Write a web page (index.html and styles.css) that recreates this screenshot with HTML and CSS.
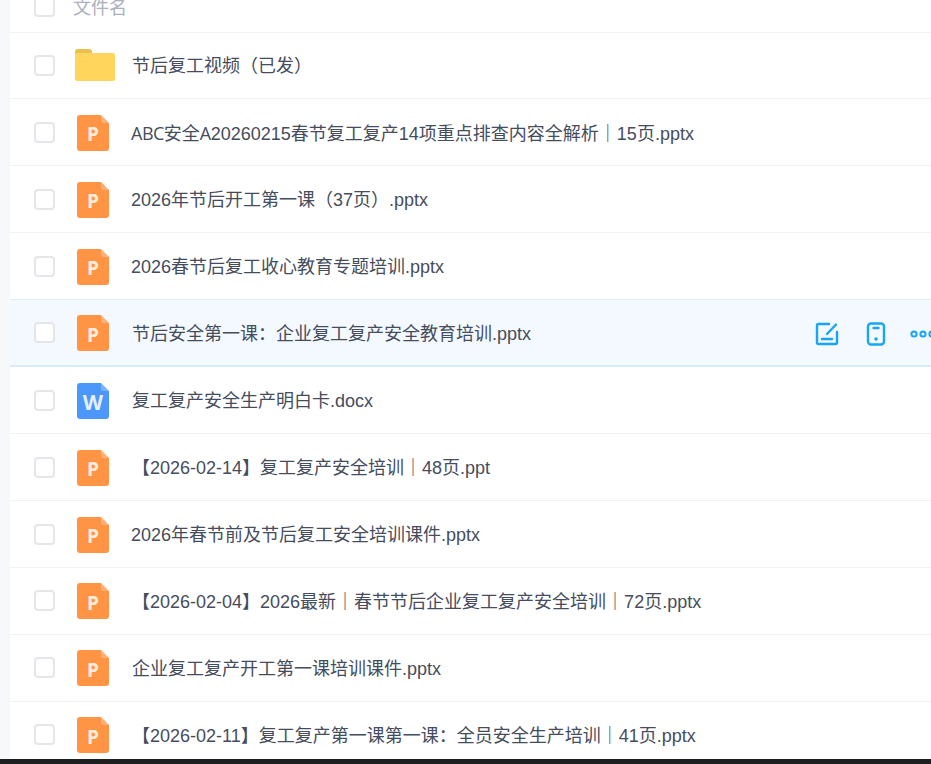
FILE: index.html
```html
<!DOCTYPE html>
<html lang="zh-CN">
<head>
<meta charset="utf-8">
<title>文件列表</title>
<link rel="stylesheet" href="styles.css">
</head>
<body>
<svg class="defs" width="0" height="0" aria-hidden="true">
  <symbol id="doc" viewBox="0 0 32 36">
    <path d="M3 0H24L32 8V33a3 3 0 0 1-3 3H3a3 3 0 0 1-3-3V3a3 3 0 0 1 3-3Z"/>
    <path d="M24 0 32 8H26a2 2 0 0 1-2-2Z" fill="#fff" fill-opacity=".25"/>
  </symbol>
</svg>
<main class="list">
  <div class="head"><span class="check"></span><span class="head-name">文件名</span></div>

  <div class="row"><span class="check"></span><span class="icon-cell"><svg class="folder" width="40" height="32" viewBox="0 0 40 32"><path d="M0 3a3 3 0 0 1 3-3h11a3 3 0 0 1 3 3v2H0Z" fill="#e9c04f"/><path d="M0 6a2 2 0 0 1 2-2h36a2 2 0 0 1 2 2v24a2 2 0 0 1-2 2H2a2 2 0 0 1-2-2Z" fill="#ffd55b"/></svg></span><span class="name">节后复工视频（已发）</span></div>

  <div class="row"><span class="check"></span><span class="icon-cell"><span class="file ppt"><svg width="32" height="36"><use href="#doc"/></svg><b>P</b></span></span><span class="name tight"><span class="caps">ABC</span>安全<span class="caps">A</span>20260215春节复工复产14项重点排查内容全解析｜15页.pptx</span></div>

  <div class="row"><span class="check"></span><span class="icon-cell"><span class="file ppt"><svg width="32" height="36"><use href="#doc"/></svg><b>P</b></span></span><span class="name tight">2026年节后开工第一课（37页）.pptx</span></div>

  <div class="row"><span class="check"></span><span class="icon-cell"><span class="file ppt"><svg width="32" height="36"><use href="#doc"/></svg><b>P</b></span></span><span class="name tight">2026春节后复工收心教育专题培训.pptx</span></div>

  <div class="row active"><span class="check"></span><span class="icon-cell"><span class="file ppt"><svg width="32" height="36"><use href="#doc"/></svg><b>P</b></span></span><span class="name">节后安全第一课：企业复工复产安全教育培训.pptx</span>
    <span class="actions">
      <svg width="24" height="24" viewBox="0 0 24 24" fill="none" stroke="#17a5f5" stroke-width="2.4" stroke-linecap="round" stroke-linejoin="round"><path d="M14 2H3.500A1.500 1.500 0 0 0 2 3.500V20.500A1.500 1.500 0 0 0 3.500 22H20.500A1.500 1.500 0 0 0 22 20.500V10"/><path d="M12 12 21 2.500"/><path d="M7 17H17"/></svg>
      <svg width="20" height="24" viewBox="0 0 20 24" fill="none" stroke="#17a5f5" stroke-width="2.4" stroke-linecap="round"><rect x="2" y="1.500" width="16" height="21" rx="3"/><path d="M7.500 6H12.500"/><circle cx="10" cy="17" r="1.800" fill="#17a5f5" stroke="none"/></svg>
      <svg class="more" width="26" height="8" viewBox="0 0 26 8" fill="none" stroke="#17a5f5" stroke-width="2"><circle cx="4" cy="4" r="2.600"/><circle cx="13" cy="4" r="2.600"/><circle cx="22" cy="4" r="2.600"/></svg>
    </span>
  </div>

  <div class="row"><span class="check"></span><span class="icon-cell"><span class="file word"><svg width="32" height="36"><use href="#doc"/></svg><b>W</b></span></span><span class="name">复工复产安全生产明白卡.docx</span></div>

  <div class="row"><span class="check"></span><span class="icon-cell"><span class="file ppt"><svg width="32" height="36"><use href="#doc"/></svg><b>P</b></span></span><span class="name">【2026-02-14】复工复产安全培训｜48页.ppt</span></div>

  <div class="row"><span class="check"></span><span class="icon-cell"><span class="file ppt"><svg width="32" height="36"><use href="#doc"/></svg><b>P</b></span></span><span class="name tight">2026年春节前及节后复工安全培训课件.pptx</span></div>

  <div class="row"><span class="check"></span><span class="icon-cell"><span class="file ppt"><svg width="32" height="36"><use href="#doc"/></svg><b>P</b></span></span><span class="name">【2026-02-04】2026最新｜春节节后企业复工复产安全培训｜72页.pptx</span></div>

  <div class="row"><span class="check"></span><span class="icon-cell"><span class="file ppt"><svg width="32" height="36"><use href="#doc"/></svg><b>P</b></span></span><span class="name">企业复工复产开工第一课培训课件.pptx</span></div>

  <div class="row"><span class="check"></span><span class="icon-cell"><span class="file ppt"><svg width="32" height="36"><use href="#doc"/></svg><b>P</b></span></span><span class="name">【2026-02-11】复工复产第一课第一课：全员安全生产培训｜41页.pptx</span></div>
</main>
<div class="taskbar"></div>
</body>
</html>
```

FILE: styles.css
```css
* { box-sizing: border-box; }
html, body { margin: 0; height: 100%; }
body {
  position: relative;
  height: 764px;
  overflow: hidden;
  background: #f7f8f9;
  padding-left: 10px;
  font-family: "Liberation Sans", "Noto Sans CJK SC", sans-serif;
  color: #454d5c;
}
.defs { position: absolute; }
.list { background: #fff; height: 764px; }
.head {
  display: flex;
  align-items: center;
  height: 32.500px;
  padding: 0 0 19px 24px;
  border-bottom: 1px solid #f1f2f4;
}
.head-name { margin-left: 18px; font-size: 18px; color: #aab0bd; }
.check {
  flex: none;
  width: 21px;
  height: 21px;
  border: 2px solid #e4e6ea;
  border-radius: 4px;
  background: #fff;
}
.row {
  display: flex;
  align-items: center;
  height: 66.950px;
  padding-left: 24px;
  border-bottom: 1px solid #f1f2f4;
}
.row.active {
  background: #f3f9fe;
  border-top: 1px solid #dcecfa;
  border-bottom: 2px solid #d8ebfb;
  margin-top: -1px;
  height: 67.950px;
}
.icon-cell {
  flex: none;
  width: 40px;
  margin-left: 20px;
  display: flex;
  justify-content: center;
}
.file { position: relative; display: block; width: 32px; height: 36px; margin: 1px 4px 0 0; }
.file svg { display: block; }
.ppt svg { fill: #ff9544; }
.word svg { fill: #4b97fb; }
.file b {
  position: absolute;
  inset: 0;
  display: flex;
  align-items: center;
  justify-content: center;
  padding-top: 3px;
  font: 700 19px "Open Sans", sans-serif;
  color: #ffeede;
}
.word b { color: #e6f0ff; font-size: 21px; }
.name { margin-left: 17px; font-size: 18px; line-height: 24px; margin-top: 2px; white-space: nowrap; }
.name.tight { margin-left: 16px; }
.caps { font-family: "Open Sans", sans-serif; letter-spacing: -0.5px; }
.actions {
  margin-left: auto;
  margin-top: 3px;
  display: flex;
  align-items: center;
  gap: 27px;
  flex: none;
  width: 116px;
  overflow: hidden;
}
.actions svg { flex: none; }
.actions .more { margin-left: -3px; }
.taskbar {
  position: absolute;
  left: 0;
  right: 0;
  bottom: 0;
  height: 5px;
  background: #1d1e20;
}
```
